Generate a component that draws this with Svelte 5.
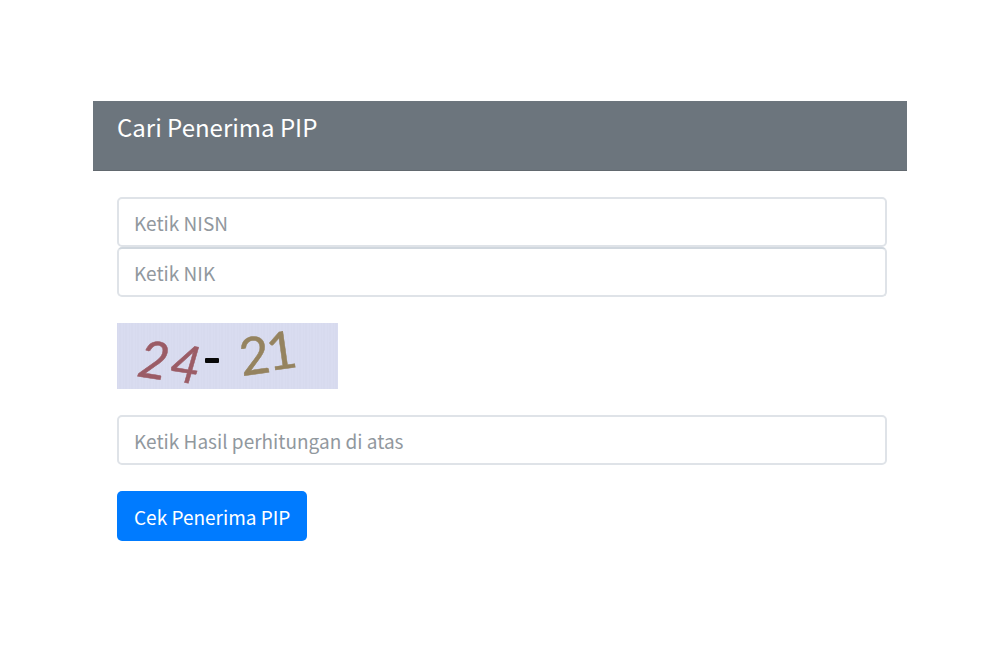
<script lang="ts">
	let nisn = $state('');
	let nik = $state('');
	let answer = $state('');

	function submit(event: SubmitEvent) {
		event.preventDefault();
	}
</script>

<main class="page">
	<section class="card">
		<header class="card__header">
			<h1 class="card__title">Cari Penerima PIP</h1>
		</header>

		<form class="card__body" onsubmit={submit}>
			<div class="fields">
				<input class="field" type="text" placeholder="Ketik NISN" aria-label="NISN" bind:value={nisn} />
				<input class="field" type="text" placeholder="Ketik NIK" aria-label="NIK" bind:value={nik} />
			</div>

			<svg class="captcha" viewBox="0 0 221 66" role="img" aria-label="24 - 21">
				<defs>
					<pattern id="weave" width="6" height="6" patternUnits="userSpaceOnUse">
						<rect width="6" height="6" fill="#d9dcf0" />
						<path d="M0 0V6M3 0V6" stroke="#d5d8ec" stroke-width="1" />
					</pattern>
				</defs>
				<rect width="221" height="66" fill="url(#weave)" />
				<g class="captcha__digits">
					<g fill="#9b5c66" stroke="#9b5c66" font-style="italic">
						<text transform="translate(19 53) rotate(9)">2</text>
						<text transform="translate(51 57) rotate(9)">4</text>
					</g>
					<g fill="#95835f" stroke="#95835f">
						<text transform="translate(125 53) rotate(-8)">2</text>
						<text transform="translate(152 48) rotate(-8)">1</text>
					</g>
				</g>
				<rect x="88" y="35" width="14" height="5" rx="1" fill="#080808" />
			</svg>

			<input
				class="field"
				type="text"
				placeholder="Ketik Hasil perhitungan di atas"
				aria-label="Hasil perhitungan"
				bind:value={answer}
			/>

			<button class="submit" type="submit">Cek Penerima PIP</button>
		</form>
	</section>
</main>

<style>
	:global(body) {
		margin: 0;
		background: #fff;
	}

	.page {
		padding: 101px 93px;
		font-family: 'Noto Sans CJK SC', 'Noto Sans', sans-serif;
	}

	.card__header {
		padding: 8px 24px 25px;
		background: #6c757d;
		border-bottom: 1px solid #62696f;
	}
	.card__title {
		margin: 0;
		font-size: 24px;
		font-weight: 400;
		line-height: 36px;
		color: #fff;
	}

	.card__body {
		display: flex;
		flex-direction: column;
		align-items: flex-start;
		gap: 26px;
		padding: 26px 20px 24px 24px;
	}

	.fields {
		display: flex;
		flex-direction: column;
		width: 100%;
	}

	.field {
		box-sizing: border-box;
		width: 100%;
		height: 50px;
		padding: 0 15px;
		border: 2px solid #dfe3e8;
		border-radius: 5px;
		background: #fff;
		font: inherit;
		font-size: 19px;
		color: #495057;
	}
	.fields .field + .field {
		border-top-color: #d0d7de;
	}
	.field::placeholder {
		color: #91989e;
		opacity: 1;
	}
	.field:focus {
		border-color: #80bdff;
		outline: none;
	}

	.captcha {
		display: block;
		width: 221px;
		height: 66px;
		overflow: visible;
	}
	.captcha__digits {
		font-family: Lato, sans-serif;
		font-size: 52px;
		stroke-width: 0.5;
	}

	.submit {
		height: 50px;
		padding: 0 17px;
		border: 0;
		border-radius: 5px;
		background: #007bff;
		font: inherit;
		font-size: 19px;
		color: #fff;
		cursor: pointer;
	}
	.submit:hover {
		background: #0069d9;
	}
</style>
